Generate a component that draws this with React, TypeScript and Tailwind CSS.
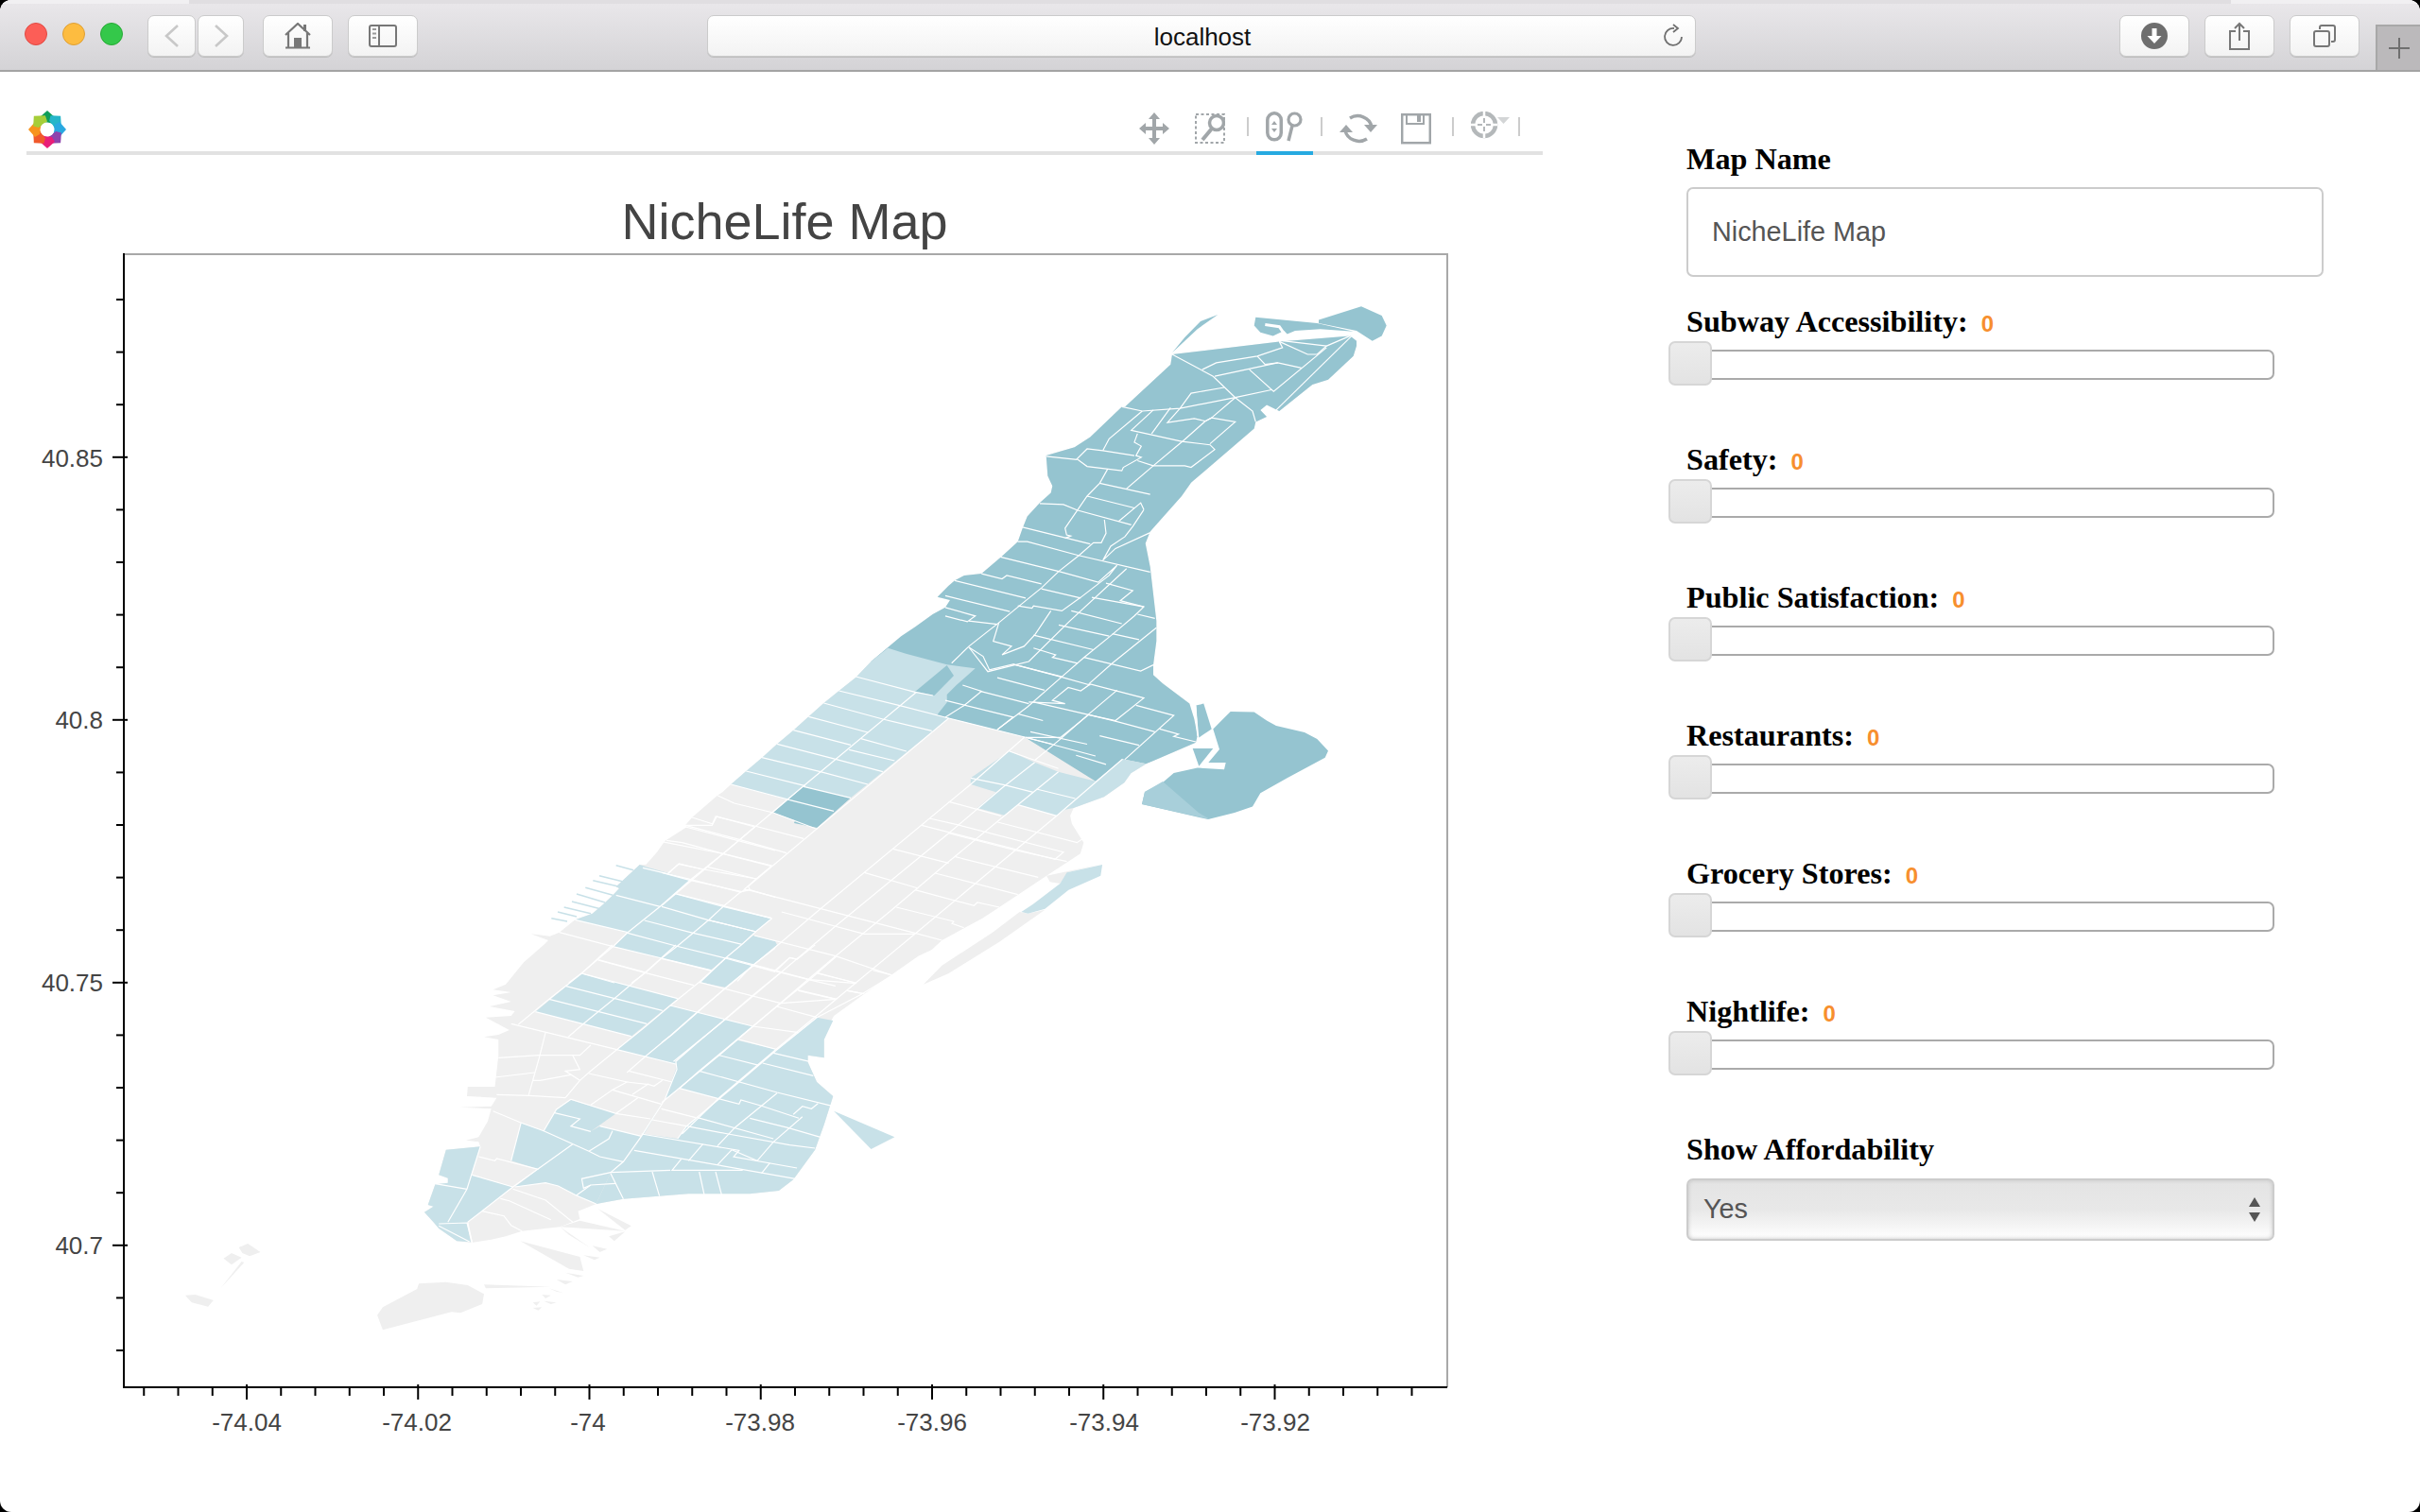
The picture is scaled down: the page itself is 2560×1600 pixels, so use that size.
const at = (ox: number, oy: number, sx: number, sy: number) => (s: string) =>
  s
    .trim()
    .split(/\s+/)
    .map((p) => {
      const [x, y] = p.split(",").map(Number);
      return `${(ox + x / sx).toFixed(1)},${(oy + y / sy).toFixed(1)}`;
    })
    .join(" ");

// traced from crops of the map, each helper maps one crop back to page pixels
const n = at(1000, 300, 3, 2.8);
const m = at(700, 700, 2.8, 3);
const s = at(380, 1000, 2.613, 3);
const w = at(520, 860, 3, 3);
const h = at(900, 620, 3, 3);
const b = at(0, 1200, 2.613, 3);

const DARK = "#95c4d0";
const LIGHT = "#c8e1e8";
const GREY = "#efefef";

const manhattan = [
  n("720,210 1060,172 1285,155 1305,170 1305,185 1295,215 1215,285 1165,300 1060,378 1020,360 1000,375 1020,395 985,410 980,430 780,590 750,630 650,735 635,770 650,840 670,1000 670,1060 660,1130 660,1160 690,1185 775,1245 790,1290 800,1340 795,1360 640,1422"),
  m("1390,355 1370,385 1310,430 1220,465 1210,490 1215,515 1250,575 1240,610 1140,680 1000,780 950,815 830,885 800,915 760,935 680,995 600,1055 510,1125"),
  s("1305,240 1285,300 1285,358 1240,350 1240,372 1265,435 1310,480 1285,570 1260,650 1200,745 1160,780 1080,790 910,790 730,806 655,822 605,845 610,870 555,895 450,908 405,925 365,935 310,945 270,940 220,900 205,880 180,848 205,830 190,825 210,760 245,755 245,740 220,730 240,650 335,640 330,625 295,620 330,610 355,560 365,520 278,515 365,512 380,485 298,480 300,450 375,450 385,350 385,300 345,292 385,285 415,270 350,230 420,225 430,210 360,195 420,180 370,160 420,150 370,142 405,125 455,55"),
  w("165,420 180,405 125,385 185,392 215,380 265,340 320,320 355,290 385,262 405,240 395,235 470,165 490,165 525,125 550,90 620,45 615,40 650,0"),
  m("70,520 90,495 165,425 180,415 205,390 250,348 297,305 342,262 390,218 435,175 480,132 525,93 575,50 620,0"),
  h("160,160 205,130 260,90 300,68 315,45 275,35 310,0"),
  n("30,880 60,865 115,860 180,808 230,765 245,725 260,690 300,650 335,620 340,600 325,570 320,510 410,485 460,455 560,365 570,365 715,240"),
].join(" ");

const northDark = `${m("1568,275 1435,325 1365,310 1285,380 1075,240 850,180 815,170")} 921,700 880,600 1100,250 1500,250 1500,792`;

const lightBlocks = [
  `${h("118,197 175,215 305,250 395,262 335,315 305,345")} ${m("845,130 815,170 850,180 560,433 420,397 375,440 205,390 250,348 297,305 342,262 390,218 435,175 480,132 525,93 575,50 620,0")}`,
  m("1030,285 1105,320 1175,350 1285,380 1365,310 1435,325 1390,355 1370,385 1310,430 1220,465 1195,470 1170,490 1055,455 1015,488 935,465 990,415 915,390 915,370"),
  w("490,172 632,212 535,298 432,382 265,340 320,320 355,290 385,262 405,240 395,235 470,165"),
  w("585,258 888,335 838,378 795,418 742,462 695,500 388,425 432,382 535,298"),
  `${w("830,390 900,408")} ${s("1155,0 1090,65 1015,135 940,118")} ${w("742,462")}`,
  s("615,90 880,170 752,290 487,212"),
  s("860,192 1088,258 1013,330 1045,302 1155,332 1265,230 1310,240 1285,300 1285,358 1240,350 1240,372 1265,435 1310,480 1285,570 1260,650 1200,745 1160,780 1080,790 910,790 730,806 655,822 695,722 730,688 760,650 780,607 835,505 845,490 875,395 875,378 712,332"),
  s("585,492 710,535 640,592 665,575 780,607 760,650 730,688 695,722 655,822 600,795 550,765 515,755 430,768 495,712 420,685 447,565 510,590 545,522"),
  s("240,650 335,640 310,730 425,768 300,880 298,882 308,943 270,940 220,900 205,880 180,848 205,830 190,825 210,760 245,755 245,740 220,730"),
  m("1065,795 1085,800 1135,785 1205,725 1300,680 1305,645 1200,670 1180,705 1100,770"),
  s("1312,527 1480,610 1415,648"),
];

const darkBlocks = [
  h("305,252 327,285 265,348 205,335"),
  m("420,397 560,433 460,528 392,513 395,505 330,480"),
  n("985,100 1180,118 1295,142 1190,135 1110,140 1085,150 1075,140 1040,155 1000,145 980,125"),
  n("1185,108 1320,68 1385,95 1400,125 1385,155 1355,170 1305,140 1185,118"),
  n("720,205 760,160 810,112 865,92 800,135"),
  `${n("905,1268 980,1270 1020,1295 1050,1310 1140,1330 1180,1350 1215,1385 1205,1405 1085,1465 1000,1510 975,1550")} 1306,860 1278,867 1208,851 1211,838 ${n("690,1478 725,1450 800,1435 885,1440 890,1420 835,1420 870,1380 850,1320")}`,
  n("795,1250 820,1245 845,1320 805,1345"),
  n("785,1378 850,1378 805,1430"),
];

const greyBlocks = [
  m("1140,680 1305,643 1205,668 1180,705 1150,700"),
  m("1060,795 1085,800 1135,788 1000,890 850,990 775,1025 830,965 980,860"),
  s("165,1075 240,1070 300,1080 345,1108 340,1140 280,1168 255,1165 65,1222 50,1175 65,1150 160,1092"),
  s("660,838 752,892 735,905"),
  s("610,875 735,908 555,895"),
  s("445,940 610,990 620,1035 580,1028"),
  s("690,925 735,910 705,940"),
  s("555,895 640,962 580,920"),
  s("645,955 685,965 665,975"),
  s("620,985 665,992 650,1000"),
  s("570,1040 620,1050 605,1055"),
  s("545,1062 590,1068 570,1078"),
  s("525,1090 565,1105 545,1100"),
  s("505,1110 530,1112 515,1122"),
  s("510,1130 545,1135 530,1140"),
  s("480,1135 500,1132 490,1145"),
  s("480,1152 505,1150 495,1160"),
  s("345,1078 530,1085 350,1090"),
  b("512,512 540,510 590,528 575,548 530,535"),
  b("660,360 685,348 720,375 690,388 670,378"),
  b("618,395 640,378 668,392 640,415"),
  b("668,405 675,408 610,490"),
];

const streets = [
  n("720,210 850,275 920,338 975,378 985,410"),
  n("815,255 860,235 990,215 1070,190 1060,172"),
  n("1060,172 1150,210 1180,210 1210,185 1285,155"),
  n("1070,170 1210,185"),
  n("990,215 1015,240 1055,235 1130,250"),
  n("855,275 1055,235"),
  n("965,255 1042,320 1210,190"),
  n("1050,375 1290,155"),
  n("920,338 1035,315"),
  n("885,308 780,325 745,370 705,412 790,400 825,408 845,398 920,410 840,475"),
  n("920,338 745,370 625,378 560,365"),
  n("920,338 845,398 825,408 760,462 660,540 575,608"),
  n("625,378 520,460 500,495"),
  n("660,375 590,435 750,468 840,478 855,492 780,545 760,540 660,540 610,525"),
  n("715,368 655,445"),
  n("610,445 600,470 622,482 605,510 622,515 565,545 560,555 450,542 418,520 450,490 500,495 600,510"),
  n("320,512 418,522"),
  n("515,550 490,592 450,630 380,725 385,745 398,748 380,755"),
  n("490,592 650,625"),
  n("450,630 600,665"),
  n("420,672 590,715"),
  n("300,652 375,655 420,672"),
  n("630,670 620,650 550,705"),
  n("630,670 595,720 570,750 525,778 500,820 540,785 650,738"),
  n("505,700 510,740 495,768 470,768 425,805 360,853 305,902 235,955 170,1005 75,1075 20,1125"),
  n("245,722 460,772"),
  n("230,765 260,765 420,805 650,855"),
  n("175,810 360,853 485,885 545,835 520,865 430,930 370,970 280,955 275,962 230,955"),
  n("115,860 180,875 195,865 305,890"),
  n("30,880 255,932"),
  n("0,925 205,972"),
  n("305,905 430,932"),
  n("0,960 95,985 70,1002 0,985"),
  n("75,1000 165,1010"),
  n("575,845 395,1000 265,1120 135,1150 75,1078"),
  n("335,970 285,1040 250,1075 180,1100 210,1075 152,1060 170,1005"),
  n("510,888 595,910 555,940 630,958 600,985 530,1040 440,1108 370,1165 260,1255 165,1322"),
  n("465,930 630,958"),
  n("400,970 560,1008"),
  n("610,980 665,992"),
  n("670,1020 530,1125 455,1187"),
  n("360,1012 520,1045"),
  n("530,1038 615,1055"),
  n("280,1042 470,1085"),
  n("280,1080 350,1100 340,1108 420,1125"),
  n("440,1108 620,1148 660,1130"),
  n("215,1128 365,1165 460,1190"),
  n("165,1168 315,1205"),
  n("110,1208 265,1245"),
  n("55,1190 115,1208 60,1250 0,1285"),
  n("0,1235 215,1285 165,1322"),
  n("230,1275 310,1295"),
  n("265,1240 380,1245 340,1235 390,1197 430,1207 460,1187 630,1228 540,1295 455,1278 365,1345 255,1345"),
  n("545,1205 450,1280 365,1350 285,1412"),
  n("280,1240 455,1278 545,1298 665,1328"),
  n("605,1250 725,1280 570,1410"),
  n("680,1320 740,1335 725,1342 795,1358"),
  n("490,1340 615,1368"),
  n("270,1328 450,1365"),
  n("255,1345 340,1365"),
  n("415,1398 510,1425"),
  n("370,1165 215,1128 140,1145 120,1105 75,1078"),
  n("795,1250 800,1340"),
  m("575,48 750,97 803,108"),
  m("525,93 705,140 850,180 1075,240 1285,300"),
  m("480,132 655,183 800,220"),
  m("435,175 610,225"),
  m("390,218 560,265"),
  m("590,245 725,285"),
  m("342,262 515,310"),
  m("555,280 690,315"),
  m("297,305 470,350"),
  m("515,310 655,350"),
  m("250,348 425,395"),
  m("470,350 610,390"),
  m("205,390 380,440"),
  m("420,397 560,433"),
  m("380,440 510,475"),
  m("165,425 215,450 330,480 455,530"),
  m("90,495 150,515 160,492 275,522 420,562"),
  m("70,520 230,565 370,608"),
  m("0,572 180,610 325,650"),
  m("20,672 50,643 125,660 280,690"),
  m("0,670 85,695 235,730"),
  m("1075,240 915,390 470,785 350,895 190,1035 30,1185 0,1210"),
  m("1105,320 1010,400 850,545 515,840 350,990 190,1135 35,1270"),
  m("1175,350 1015,490 850,635 680,790 515,935 340,1095 170,1250 0,1400"),
  m("1365,310 1170,490 990,650 750,865 575,1020 340,1230 170,1385 60,1500"),
  m("850,180 255,715"),
  m("755,97 420,395 0,775"),
  m("1030,285 1175,340"),
  m("915,370 1015,392 1100,415"),
  m("1110,405 1225,435"),
  m("1055,455 1170,490"),
  m("850,445 1005,490"),
  m("995,510 1230,575 1250,560"),
  m("793,498 875,518 1190,605 1165,628 770,520"),
  m("850,545 1050,600 1200,635"),
  m("685,595 850,640"),
  m("870,620 1115,685"),
  m("600,670 760,720"),
  m("810,672 1055,740"),
  m("750,725 925,775 935,765 1000,780"),
  m("695,780 865,825 860,832 895,845"),
  m("255,725 750,862 830,885"),
  m("355,795 600,865 750,865"),
  m("275,870 515,935 680,995"),
  m("180,775 325,815"),
  m("135,820 280,858"),
  m("45,738 185,775"),
  m("340,980 380,940 400,945 435,915"),
  m("270,965 435,1010 515,1030"),
  m("460,990 575,1020"),
  m("405,1045 515,1072"),
  m("550,1045 600,1055"),
  m("340,1095 460,1130"),
  w("480,175 632,212"),
  w("395,262 535,298"),
  w("265,340 432,380"),
  w("215,380 385,425 540,462 695,500"),
  w("340,467 490,507"),
  w("285,510 390,540"),
  w("585,258 735,298 888,335"),
  w("540,298 685,340 840,378"),
  w("485,342 640,382 795,418"),
  w("432,382 585,423 742,462"),
  w("742,462 828,485 900,505"),
  w("555,88 605,95 735,130 890,168"),
  w("615,45 780,88 900,120"),
  w("560,192 595,162 670,180"),
  w("685,172 840,210"),
  w("632,212 790,252 805,245 820,245 900,268"),
  w("785,88 735,130 632,212 535,298 432,380 385,425 285,510 245,540"),
  w("890,168 840,210 800,245"),
  w("815,235 820,245 790,252 735,298 690,340 640,382 590,423 540,462 490,507 445,540"),
  w("890,335 838,378 795,418 742,462 660,540"),
  w("900,430 828,485 780,535"),
  w("615,40 700,40 715,12 835,45 785,88"),
  s("700,0 615,90 525,172 440,252"),
  s("875,0 790,88 705,170 620,250 578,292"),
  s("1015,40 940,118 860,192 785,265 712,332 640,400 610,430 570,485"),
  s("1090,65 1015,135 935,212 860,288 790,355 740,405"),
  s("1165,88 1088,160 1012,235 935,310 875,370 878,395 845,490 780,607 730,688 695,722 615,742 620,772 640,762"),
  s("1320,35 1245,110 1165,185 1088,258 1013,330 940,400 885,455"),
  s("1265,230 1155,332 1050,435 995,488 905,575 880,615"),
  s("1475,95 1390,155 1265,230"),
  s("660,48 790,88 925,128"),
  s("615,90 880,170"),
  s("570,130 838,208"),
  s("525,172 795,250"),
  s("487,212 752,290"),
  s("420,250 712,332 875,378"),
  s("860,192 1088,258 1215,278"),
  s("940,118 1165,185 1320,172"),
  s("835,43 975,82"),
  s("1015,40 1245,110 1375,122"),
  s("1150,80 1190,40 1210,45 1260,0"),
  s("1210,142 1320,172"),
  s("1265,88 1370,120"),
  s("1350,145 1395,155"),
  s("1420,80 1470,95"),
  s("1050,300 1155,332"),
  s("995,350 1105,382"),
  s("1145,343 1245,370"),
  s("1115,375 1255,415"),
  s("940,400 1155,468 1310,512"),
  s("885,455 1050,505 1055,492 1110,510 1215,550"),
  s("1200,538 1225,512 1250,520 1268,503"),
  s("935,548 1145,615"),
  s("1080,550 1185,580 1275,610"),
  s("1155,470 1040,578 990,638"),
  s("1225,545 1145,625 1100,685 1030,650"),
  s("780,600 1050,652 1035,672 1210,708"),
  s("905,575 1020,600 1190,635 1260,645"),
  s("950,632 910,685"),
  s("990,698 1030,650"),
  s("760,652 1205,742"),
  s("890,680 865,715 1060,715"),
  s("1135,692 1112,725"),
  s("695,722 860,715"),
  s("810,720 830,797"),
  s("940,720 955,800"),
  s("985,720 1003,798"),
  s("695,725 710,760 730,806"),
  s("640,762 708,757"),
  s("640,762 600,795"),
  s("835,520 930,548"),
  s("810,555 905,575"),
  s("745,400 865,435"),
  s("740,435 800,443 815,448 838,430"),
  s("755,475 800,440"),
  s("635,408 740,435 700,460 640,508"),
  s("700,460 835,505"),
  s("770,485 710,535"),
  s("585,490 710,535 805,552"),
  s("665,575 780,607"),
  s("540,533 610,552 585,575 640,592"),
  s("700,590 690,615 635,655"),
  s("585,490 545,522 510,590 635,655 665,672 730,688"),
  s("370,527 445,563 510,590"),
  s("447,565 420,685"),
  s("330,672 375,685 380,678 495,712"),
  s("312,730 425,768"),
  s("590,632 425,768 300,880"),
  s("335,640 298,775 245,880"),
  s("210,758 298,775"),
  s("220,885 298,882 312,945"),
  s("220,892 305,942"),
  s("515,278 497,360 468,478"),
  s("385,358 497,350 610,350 640,318"),
  s("590,350 610,395 570,400 610,430"),
  s("375,420 485,405"),
  s("480,430 500,430 585,412"),
  s("380,475 470,478 570,485"),
  s("430,768 515,755 550,765 600,795 655,822"),
  s("425,775 515,810 590,880"),
  s("390,805 415,812 530,872"),
  s("340,845 400,860 420,890 450,908"),
  s("300,880 312,945"),
];

const piers = [
  w("190,335 240,345"),
  w("210,315 270,330"),
  w("230,300 315,320"),
  w("255,282 345,305"),
  w("270,258 360,285"),
  w("298,238 385,262"),
  w("322,215 405,235"),
  w("342,200 415,218"),
  w("395,167 450,182"),
];

const yTicks = Array.from({ length: 21 }, (_, i) => 317 + i * 55.6);
const xTicks = Array.from({ length: 38 }, (_, i) => 152.25 + i * 36.25);
const yLabels: [string, number][] = [
  ["40.85", 485],
  ["40.8", 762],
  ["40.75", 1040],
  ["40.7", 1318],
];
const xLabels: [string, number][] = [
  ["-74.04", 261],
  ["-74.02", 441],
  ["-74", 622],
  ["-73.98", 804],
  ["-73.96", 986],
  ["-73.94", 1168],
  ["-73.92", 1349],
];

const sliders = [
  "Subway Accessibility:",
  "Safety:",
  "Public Satisfaction:",
  "Restaurants:",
  "Grocery Stores:",
  "Nightlife:",
];

function NicheMap() {
  return (
    <svg viewBox="0 164 1632 1436" className="block h-[1436px] w-[1632px]">
      <defs>
        <clipPath id="island">
          <polygon points={manhattan} />
        </clipPath>
      </defs>
      <text x="830" y="234" textAnchor="middle" dominantBaseline="central" fontSize="54" fill="#444444">
        NicheLife Map
      </text>
      <path d="M131 269H1531V1468" fill="none" stroke="#a8a8a8" strokeWidth="2" />
      <polygon points={manhattan} fill={GREY} />
      <g clipPath="url(#island)">
        <polygon points={northDark} fill={DARK} />
      </g>
      {greyBlocks.map((p, i) => (
        <polygon key={i} points={p} fill={GREY} />
      ))}
      {lightBlocks.map((p, i) => (
        <polygon key={i} points={p} fill={LIGHT} />
      ))}
      <polygon points={s("885,455 995,488 905,575 880,615 787,600 812,553 835,505 845,490")} fill={GREY} />
      {darkBlocks.map((p, i) => (
        <polygon key={i} points={p} fill={DARK} />
      ))}
      <polygon points="1211,838 1230,827 1268,860 1280,867 1208,851" fill="#a8cfda" />
      {piers.map((p, i) => (
        <polyline key={i} points={p} fill="none" stroke={LIGHT} strokeWidth="1.5" />
      ))}
      {streets.map((p, i) => (
        <polyline key={i} points={p} fill="none" stroke="#ffffff" strokeWidth="1.2" />
      ))}
      <polyline points={n("1015,122 1060,128 1075,148")} fill="none" stroke="#ffffff" strokeWidth="3" />
      <path d="M131 268V1469M130 1468H1531" fill="none" stroke="#000000" strokeWidth="2" />
      {yTicks.map((y, i) => {
        const major = (i - 3) % 5 === 0;
        return <path key={y} d={`M${major ? 119 : 123} ${y}H${major ? 135 : 131}`} stroke="#000000" strokeWidth="2" />;
      })}
      {xTicks.map((x, i) => {
        const major = (i - 3) % 5 === 0;
        return <path key={x} d={`M${x} ${major ? 1465 : 1468}V${major ? 1481 : 1477}`} stroke="#000000" strokeWidth="2" />;
      })}
      {yLabels.map(([t, y]) => (
        <text key={t} x="109" y={y} textAnchor="end" dominantBaseline="central" fontSize="26" fill="#444444">
          {t}
        </text>
      ))}
      {xLabels.map(([t, x]) => (
        <text key={t} x={x} y="1505" textAnchor="middle" dominantBaseline="central" fontSize="26" fill="#444444">
          {t}
        </text>
      ))}
    </svg>
  );
}

function Logo() {
  const colors = ["#0f9d58", "#25b5c9", "#29a8e0", "#8e44ad", "#e91e78", "#f0592b", "#f7941e", "#a6ce39"];
  return (
    <svg viewBox="-20 -20 40 40" className="-mb-[3px] ml-[2px] h-[40px] w-[40px]">
      {colors.map((c, i) => (
        <polygon key={c} points="0,-20 9,-12 6,-6 -5,-8 -8,-13" fill={c} transform={`rotate(${i * 45})`} />
      ))}
      <circle r="7.5" fill="#ffffff" />
    </svg>
  );
}

const Sep = () => <div className="mb-[10px] ml-[18px] h-[20px] w-[2px] bg-[#cccccc]" />;

function Toolbar() {
  const c = "#a1a6a9";
  return (
    <div className="ml-[28px] flex h-[88px] items-end border-b-4 border-[#e2e2e2] pb-[6px]">
      <Logo />
      <div className="ml-auto mr-[24px] flex items-end">
        <svg viewBox="0 0 32 36" className="h-[36px] w-[32px]" fill={c}>
          <path d="M14 6h4v10h10v4H18v10h-4V20H4v-4h10z" />
          <path d="M16 1l6 7H10zM16 35l-6-7h12zM0 18l7-6v12zM32 18l-7 6V12z" />
        </svg>
        <svg viewBox="0 0 32 36" className="ml-[27px] h-[36px] w-[32px]" fill="none" stroke={c}>
          <rect x="1" y="3" width="30" height="30" strokeWidth="2" strokeDasharray="3 2.5" />
          <circle cx="23" cy="12" r="7.5" strokeWidth="3.5" fill="#ffffff" />
          <path d="M18 18L8 30" strokeWidth="4" />
        </svg>
        <div className="mb-[10px] ml-[23px] h-[20px] w-[2px] bg-[#cccccc]" />
        <div className="relative ml-[18px] h-[36px] w-[40px]">
          <svg viewBox="0 0 40 36" className="h-[36px] w-[40px]" fill="none" stroke={c}>
            <rect x="1.8" y="1.8" width="14.5" height="28" rx="7.2" strokeWidth="3.5" />
            <path d="M9 10l3 4H6zM9 22l-3-4h6z" fill={c} stroke="none" />
            <circle cx="30.5" cy="8.5" r="6.5" strokeWidth="3.2" />
            <path d="M28 15l-4 16" strokeWidth="3.5" />
          </svg>
          <div className="absolute -left-[10px] top-[42px] h-[4px] w-[60px] bg-[#26aae1]" />
        </div>
        <Sep />
        <svg viewBox="0 0 40 36" className="ml-[18px] h-[36px] w-[40px]" fill="none" stroke={c} strokeWidth="3.5">
          <path d="M34 16A15 14 0 0 0 11 7" />
          <path d="M6 20A15 14 0 0 0 29 29" />
          <path d="M26 14h14l-7 8zM0 22h14L7 14z" fill={c} stroke="none" />
        </svg>
        <svg viewBox="0 0 32 36" className="ml-[25px] h-[36px] w-[32px]" fill="none" stroke={c}>
          <rect x="1.2" y="3.2" width="29.6" height="30" strokeWidth="2.5" />
          <path d="M6 3v10h18V3" strokeWidth="2" />
          <rect x="17" y="4" width="4" height="7" fill={c} stroke="none" />
        </svg>
        <div className="mb-[10px] ml-[22px] h-[20px] w-[2px] bg-[#cccccc]" />
        <svg viewBox="0 0 42 36" className="ml-[18px] h-[36px] w-[42px]" fill="none" stroke="#b4b8ba">
          <circle cx="14" cy="14" r="12" strokeWidth="4.5" />
          <path d="M14 0v7M14 21v7M0 14h7M21 14h7" strokeWidth="2.5" stroke="#ffffff" />
          <path d="M14 7v5M14 16v5M7 14h5M16 14h5" strokeWidth="2" />
          <path d="M28 6h13l-6.5 7z" fill="#d3d5d6" stroke="none" />
        </svg>
        <div className="mb-[10px] ml-[8px] h-[20px] w-[2px] bg-[#cccccc]" />
      </div>
    </div>
  );
}

function NavButton({ className, children }: { className: string; children: React.ReactNode }) {
  return (
    <div
      className={`flex h-[44px] items-center justify-center rounded-[7px] border border-[#cbcbcb] bg-gradient-to-b from-[#ffffff] to-[#f3f3f3] shadow-[0_1px_0_#bdbdbd] ${className}`}
    >
      {children}
    </div>
  );
}

function BrowserBar() {
  const g = "#777777";
  return (
    <div className="border-b-2 border-[#a3a3a3] bg-gradient-to-b from-[#eae8eb] to-[#d4d3d6]">
      <div className="flex h-[4px] justify-between bg-[#e0dee1]">
        <div className="w-[200px] bg-[#f1f0f2]" />
        <div className="w-[200px] bg-[#f1f0f2]" />
      </div>
      <div className="flex h-[70px] items-start pl-[26px] pt-[12px]">
        <div className="mr-[16px] mt-[8px] h-[24px] w-[24px] rounded-full border border-[#e14942] bg-[#fc5e57]" />
        <div className="mr-[16px] mt-[8px] h-[24px] w-[24px] rounded-full border border-[#de9f34] bg-[#fdbc40]" />
        <div className="mt-[8px] h-[24px] w-[24px] rounded-full border border-[#27aa35] bg-[#34c84a]" />
        <NavButton className="ml-[26px] w-[51px]">
          <svg width="16" height="24" viewBox="0 0 16 24" fill="none" stroke="#c8c8c8" strokeWidth="2.6">
            <path d="M14 1L2 12l12 11" />
          </svg>
        </NavButton>
        <NavButton className="ml-[2px] w-[49px]">
          <svg width="16" height="24" viewBox="0 0 16 24" fill="none" stroke="#c8c8c8" strokeWidth="2.6">
            <path d="M2 1l12 11L2 23" />
          </svg>
        </NavButton>
        <NavButton className="ml-[20px] w-[74px]">
          <svg width="28" height="28" viewBox="0 0 28 28" fill="none" stroke={g}>
            <path d="M1 13L14 1l13 12M4 11v15M24 11v15M1 26.5h26" strokeWidth="2.2" />
            <path d="M20 2h3v7h-3z" fill={g} stroke="none" />
            <rect x="10" y="16" width="8" height="10" fill={g} stroke="none" />
          </svg>
        </NavButton>
        <NavButton className="ml-[16px] w-[74px]">
          <svg width="30" height="24" viewBox="0 0 30 24" fill="none" stroke={g}>
            <rect x="1" y="1" width="28" height="22" rx="2" strokeWidth="2" />
            <path d="M11 1v22" strokeWidth="2" />
            <path d="M4 5h4M4 9.500h4M4 14h4" strokeWidth="2" stroke="#9a9a9a" />
          </svg>
        </NavButton>
        <div className="relative ml-[306px] flex h-[44px] w-[1046px] items-center justify-center rounded-[7px] border border-[#cbcbcb] bg-gradient-to-b from-[#ffffff] to-[#f3f3f3] pl-[2px] pt-[2px] text-[26px] text-[#111111] shadow-[0_1px_0_#bdbdbd]">
          localhost
          <svg
            width="24"
            height="26"
            viewBox="0 0 24 26"
            fill="none"
            stroke="#6f6f6f"
            strokeWidth="1.8"
            className="absolute right-[10px] top-[8px]"
          >
            <path d="M20 14a9 9 0 1 1-8-9" />
            <path d="M11 1l5 4-5 4" />
          </svg>
        </div>
        <NavButton className="ml-[448px] w-[74px]">
          <svg width="28" height="28" viewBox="0 0 28 28">
            <circle cx="14" cy="14" r="14" fill="#6e6e6e" />
            <path d="M11.5 6h5v8h5L14 22l-7.500-8h5z" fill="#ffffff" />
          </svg>
        </NavButton>
        <NavButton className="ml-[16px] w-[74px]">
          <svg width="24" height="30" viewBox="0 0 24 30" fill="none" stroke={g} strokeWidth="2">
            <path d="M8 10H2v19h20V10h-6" />
            <path d="M12 20V2M7 7l5-5 5 5" />
          </svg>
        </NavButton>
        <NavButton className="ml-[16px] w-[74px]">
          <svg width="24" height="24" viewBox="0 0 24 24" fill="none" stroke={g} strokeWidth="2">
            <rect x="1" y="7" width="16" height="16" rx="2" />
            <path d="M7 5V3a2 2 0 0 1 2-2h12a2 2 0 0 1 2 2v13a2 2 0 0 1-2 2h-2" />
          </svg>
        </NavButton>
        <div className="ml-[17px] mt-auto flex h-[48px] w-[47px] items-center justify-center self-end border-l-2 border-t-2 border-[#a8a8a8] bg-[#bbb9bb]">
          <svg width="22" height="22" viewBox="0 0 22 22" stroke="#6f6f6f" strokeWidth="2">
            <path d="M11 0v22M0 11h22" />
          </svg>
        </div>
      </div>
    </div>
  );
}

function Slider({ label, first }: { label: string; first?: boolean }) {
  return (
    <div className={first ? "mt-[29px]" : "mt-[66px]"}>
      <div className="flex h-[40px] items-center pb-[3px] font-['Liberation_Serif',serif] text-[32.2px] font-bold text-black">
        {label}
        <span className="ml-[14px] mt-[5px] font-['Liberation_Sans',sans-serif] text-[24px] font-bold text-[#f78f2e]">0</span>
      </div>
      <div className="relative mt-[8px] h-[32px] w-[622px] rounded-[7px] border-2 border-[#aaaaaa] bg-white">
        <div className="absolute -left-[21px] -top-[11px] h-[47px] w-[46px] rounded-[7px] border-2 border-[#d6d6d6] bg-gradient-to-b from-[#ececec] to-[#e3e3e3]" />
      </div>
    </div>
  );
}

function Controls() {
  return (
    <div className="ml-[152px] w-[674px] pt-[74px]">
      <div className="h-[40px] font-['Liberation_Serif',serif] text-[32.2px] font-bold leading-[37px] text-black">Map Name</div>
      <input
        readOnly
        value="NicheLife Map"
        className="mt-[8px] block h-[95px] w-[674px] rounded-[7px] border-2 border-[#cccccc] bg-white px-[25px] text-[28.8px] text-[#555555] outline-none"
      />
      {sliders.map((label, i) => (
        <Slider key={label} label={label} first={i === 0} />
      ))}
      <div className="mt-[65px] h-[40px] font-['Liberation_Serif',serif] text-[32.2px] font-bold leading-[38px] text-black">
        Show Affordability
      </div>
      <div className="relative mt-[10px] flex h-[66px] w-[622px] items-center rounded-[7px] border-2 border-[#cccccc] bg-gradient-to-b from-[#e4e4e4] via-[#e8e8e8] to-[#ffffff] pl-[16px] text-[28.8px] text-[#555555] shadow-[inset_0_0_4px_#c4c4c4]">
        Yes
        <svg width="12" height="26" viewBox="0 0 12 26" fill="#555555" className="absolute right-[13px] top-[18px]">
          <path d="M6 0l6 10H0zM6 26L0 16h12z" />
        </svg>
      </div>
    </div>
  );
}

export default function App() {
  return (
    <div className="h-[1600px] w-[2560px] overflow-hidden bg-black font-['Liberation_Sans',sans-serif]">
      <div className="h-[1600px] w-[2560px] overflow-hidden rounded-[12px] bg-white">
        <BrowserBar />
        <div className="flex">
          <div className="w-[1632px] shrink-0">
            <Toolbar />
            <NicheMap />
          </div>
          <Controls />
        </div>
      </div>
    </div>
  );
}
